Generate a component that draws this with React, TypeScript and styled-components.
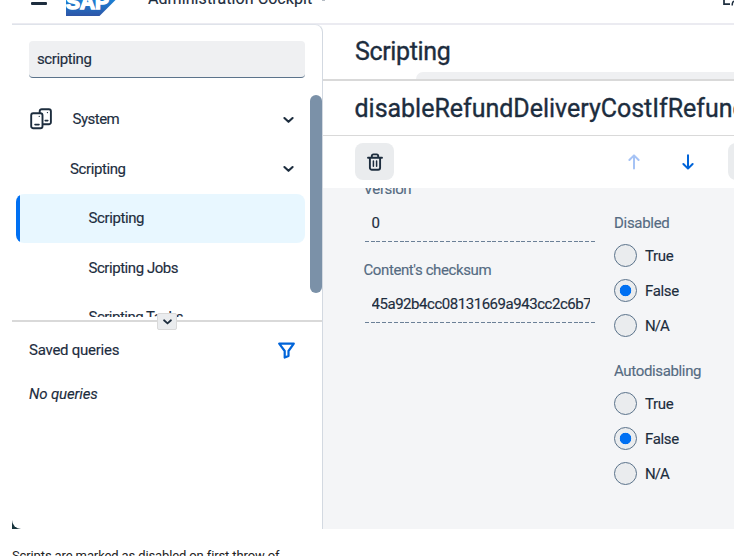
import React from 'react';
import styled, { createGlobalStyle } from 'styled-components';

const Global = createGlobalStyle`
  *, *::before { box-sizing: border-box; }
  html, body { margin: 0; padding: 0; background: #fff; overflow: hidden; }
  body { font-family: Roboto, "Liberation Sans", sans-serif; color: #1d2d3e; }
  svg { display: block; flex: none; }
`;

const Page = styled.div`
  width: 754px;
  height: 556px;
  padding: 0 20px 0 12px;
  overflow: hidden;
  display: flex;
  flex-direction: column;
`;

const Frame = styled.div`
  height: 529px;
  flex: none;
  display: flex;
  flex-direction: column;
  overflow: hidden;
  background: linear-gradient(#fff 480px, #17343d 480px);
`;

const Text = styled.span<{ $size?: number; $track?: number; $italic?: boolean; $muted?: boolean }>`
  font-size: ${p => p.$size ?? 15}px;
  line-height: 20px;
  letter-spacing: ${p => p.$track ?? 0}px;
  font-style: ${p => (p.$italic ? 'italic' : 'normal')};
  color: ${p => (p.$muted ? '#556b82' : '#1d2d3e')};
  white-space: nowrap;
  -webkit-text-stroke: ${p => ((p.$size ?? 15) > 20 ? 0.35 : 0.15)}px currentColor;
`;

const Header = styled.header`
  height: 25px;
  flex: none;
  display: flex;
  align-items: flex-start;
  background: #fff;
  border-bottom: 2px solid #ebebf1;
  padding-left: 19px;
  ${Text} { margin: -11px 0 0 31px; }
`;

const MenuBar = styled.span`
  width: 16px;
  height: 2.5px;
  margin: 2px 19px 0 0;
  border-radius: 1px;
  background: #1d2d3e;
`;

const HeaderArrow = styled.span`
  width: 3px;
  height: 1px;
  margin-left: 10px;
  background: #b5bcc4;
`;

const HeaderEnd = styled.div`
  margin-left: auto;
`;

const Body = styled.div`
  flex: 1;
  min-height: 0;
  display: flex;
`;

const Sidebar = styled.nav`
  width: 311px;
  flex: none;
  display: flex;
  flex-direction: column;
  margin-top: -1px;
  border-right: 1px solid #d3d9e1;
  border-top: 1px solid #dfe3ea;
  border-top-right-radius: 8px;
  border-bottom-left-radius: 9px;
  background: #fff;
`;

const Search = styled.div`
  margin: 16px 17px;
  width: 276px;
  height: 37px;
  flex: none;
  display: flex;
  align-items: center;
  padding-left: 8px;
  border-radius: 4px;
  background: #eff0f2;
  border-bottom: 1px solid #5b738b;
`;

const TreeArea = styled.div`
  height: 223px;
  flex: none;
  display: flex;
  overflow: hidden;
  padding-left: 4px;
`;

const Tree = styled.div`
  width: 289px;
  padding-top: 0.5px;
  display: flex;
  flex-direction: column;
`;

const TreeRow = styled.div<{ $indent: number; $selected?: boolean }>`
  height: 49.5px;
  flex: none;
  display: flex;
  align-items: center;
  padding: 0 10px 0 ${p => p.$indent}px;
  border-radius: 8px;
  background: ${p => (p.$selected ? 'linear-gradient(90deg, #0070f2 4.5px, #e8f7ff 4.5px)' : 'transparent')};
  > svg { margin-left: auto; }
`;

const IconSlot = styled.span`
  width: 42.5px;
  flex: none;
`;

const ScrollThumb = styled.div`
  width: 12.5px;
  height: 198px;
  margin: 1px 0 0 4.5px;
  border-radius: 7px;
  background: #7b91a8;
`;

const Splitter = styled.div`
  height: 2px;
  flex: none;
  margin-top: 3px;
  background: #d9d9d9;
  display: flex;
  align-items: center;
  justify-content: center;
`;

const SplitterButton = styled.span`
  width: 20px;
  height: 17px;
  flex: none;
  position: relative;
  display: flex;
  align-items: center;
  justify-content: center;
  background: #eaecee;
  border: 1px solid #d9d9d9;
  border-radius: 2px;
`;

const Queries = styled.div`
  display: flex;
  flex-direction: column;
  gap: 24px;
  padding: 18px 27px 0 17px;
`;

const QueriesHead = styled.div`
  display: flex;
  justify-content: space-between;
  align-items: center;
`;

const Main = styled.main`
  flex: 1;
  min-width: 0;
  display: flex;
  flex-direction: column;
  background: #fff;
  overflow: hidden;
`;

const TitleBar = styled.div`
  height: 56px;
  flex: none;
  display: flex;
  flex-direction: column;
  justify-content: space-between;
  padding: 17px 0 0 32px;
  border-bottom: 2px solid #d9d9d9;
`;

const FilterStrip = styled.div`
  height: 7px;
  margin-left: 61px;
  border-top-left-radius: 8px;
  background: #eff0f2;
`;

const RecordTitle = styled.div`
  height: 55px;
  flex: none;
  padding: 17.5px 0 0 31.5px;
  border-bottom: 1px solid #d9d9d9;
  overflow: hidden;
  display: flex;
`;

const Toolbar = styled.div`
  height: 52px;
  flex: none;
  display: flex;
  align-items: center;
  padding: 0 0 1px 32px;
  overflow: hidden;
`;

const ToolButton = styled.span`
  width: 39px;
  height: 37px;
  flex: none;
  display: flex;
  align-items: center;
  justify-content: center;
  border-radius: 8px;
  background: #eaecee;
`;

const ArrowGroup = styled.div`
  display: flex;
  gap: 38px;
  margin: 0 31.5px 0 232px;
`;

const Content = styled.div`
  flex: 1;
  min-height: 0;
  display: flex;
  overflow: hidden;
  background: #f4f5f7;
`;

const FieldColumn = styled.div`
  width: 232px;
  margin: -9px 0 0 40.5px;
  display: flex;
  flex-direction: column;
  gap: 18px;
`;

const Field = styled.div`
  display: flex;
  flex-direction: column;
  gap: 5px;
`;

const Value = styled.div`
  height: 38px;
  margin-left: 1.5px;
  padding: 0 5px 0 6.5px;
  display: flex;
  align-items: center;
  background: repeating-linear-gradient(90deg, #6b8097 0 4px, #f4f5f7 4px 5.8px) bottom / 100% 1.3px no-repeat;
`;

const Clip = styled.span`
  overflow: hidden;
  width: 218.5px;
  display: flex;
`;

const RadioColumn = styled.div`
  margin: 24.5px 0 0 18.5px;
  display: flex;
  flex-direction: column;
  gap: 23.5px;
`;

const RadioGroup = styled.div`
  display: flex;
  flex-direction: column;
`;

const RadioList = styled.div`
  display: flex;
  flex-direction: column;
  gap: 12px;
  margin-top: 11.5px;
`;

const RadioRow = styled.label`
  display: flex;
  align-items: center;
  gap: 8px;
  height: 23px;
`;

const Circle = styled.span<{ $on: boolean }>`
  width: 23px;
  height: 23px;
  border: 1px solid #5b738b;
  border-radius: 50%;
  background: ${p => (p.$on ? 'radial-gradient(circle, #0070f2 5.4px, #eaecee 6.1px)' : '#eaecee')};
`;

const Caption = styled.div`
  padding-top: 19px;
  line-height: 16px;
  font-size: 13px;
  letter-spacing: -0.12px;
  color: #222;
  white-space: nowrap;
`;

const Chevron = ({ size = 13 }: { size?: number }) => (
  <svg width={size} height={size} viewBox="0 0 13 13" fill="none" stroke="#1d2d3e" strokeWidth="2.1" strokeLinecap="round" strokeLinejoin="round">
    <path d="M2.4 5 6.5 8.8 10.6 5" />
  </svg>
);

const Logo = () => (
  <svg width="51" height="17" viewBox="0 0 51 17">
    <defs>
      <linearGradient id="sap" x1="0" y1="0" x2="0" y2="1">
        <stop offset="0" stopColor="#1b80d4" />
        <stop offset="1" stopColor="#2e55a7" />
      </linearGradient>
    </defs>
    <path d="M0 0H49.5L33.5 16H0Z" fill="url(#sap)" />
    <text x="0" y="9.2" fontFamily="Liberation Sans, sans-serif" fontWeight="700" fontSize="21" textLength="43" lengthAdjust="spacingAndGlyphs" fill="#fff" stroke="#fff" strokeWidth="1.5">SAP</text>
  </svg>
);

const SystemIcon = () => (
  <svg width="22" height="22" viewBox="0 0 22 22" fill="none" stroke="#1d2d3e" strokeWidth="1.9" strokeLinecap="round" strokeLinejoin="round">
    <rect x="1.2" y="5.2" width="11.3" height="15" rx="2" />
    <path d="M9.7 4.6V3.2a2 2 0 0 1 2-2h7.2a2 2 0 0 1 2 2v11a2 2 0 0 1-2 2h-5.6" />
    <path d="M5 16.6h4M15.2 12.6h2.6" strokeWidth="1.6" />
    <path d="M9.2 8.3h.1M17.4 4.6h.1" strokeWidth="1.3" />
  </svg>
);

const FilterIcon = () => (
  <svg width="17" height="17" viewBox="0 0 17 17" fill="none" stroke="#0064d9" strokeWidth="2.2" strokeLinejoin="round">
    <path d="M1.2 1.6H15.8L10.5 9V14L6.7 15.6V9Z" />
  </svg>
);

const TrashIcon = () => (
  <svg width="16" height="18" viewBox="0 0 16 18" fill="none" stroke="#1d2d3e" strokeWidth="1.9" strokeLinecap="round" strokeLinejoin="round">
    <path d="M1 4.8H15M4.8 4.4V3a1.6 1.6 0 0 1 1.6-1.6h3.2A1.6 1.6 0 0 1 11.2 3v1.4M2.9 5v9.7a2 2 0 0 0 2 2h6.2a2 2 0 0 0 2-2V5" />
    <path d="M6.4 8v5.2M9.6 8v5.2" strokeWidth="1.5" />
  </svg>
);

const Arrow = ({ up, color }: { up?: boolean; color: string }) => (
  <svg width="16" height="16" viewBox="0 0 16 16" fill="none" stroke={color} strokeWidth="2" strokeLinecap="round" strokeLinejoin="round">
    <path d={up ? 'M8 14.6V1.6M3.4 6 8 1.4 12.6 6' : 'M8 1.2V14.4M3.4 10 8 14.6 12.6 10'} />
  </svg>
);

const UserIcon = () => (
  <svg width="12" height="6" viewBox="0 0 12 6" fill="none" stroke="#1d2d3e" strokeWidth="1.7">
    <path d="M2 0V4.1H8" />
    <path d="M12 1.2C10.6 1.4 10.2 2.2 10.2 5.4" strokeWidth="1.5" />
  </svg>
);

const Radios = ({ title, track }: { title: string; track: number }) => (
  <RadioGroup>
    <Text $muted $track={track}>{title}</Text>
    <RadioList>
      {['True', 'False', 'N/A'].map(label => (
        <RadioRow key={label}>
          <Circle $on={label === 'False'} />
          <Text $track={label === 'N/A' ? -0.9 : -0.35}>{label}</Text>
        </RadioRow>
      ))}
    </RadioList>
  </RadioGroup>
);

export default function App() {
  return (
    <Page>
      <Global />
      <Frame>
        <Header>
          <MenuBar />
          <Logo />
          <Text $size={16} $track={0.08}>Administration Cockpit</Text>
          <HeaderArrow />
          <HeaderEnd><UserIcon /></HeaderEnd>
        </Header>
        <Body>
          <Sidebar>
            <Search><Text $track={-0.4}>scripting</Text></Search>
            <TreeArea>
              <Tree>
                <TreeRow $indent={14}>
                  <IconSlot><SystemIcon /></IconSlot>
                  <Text $track={-0.5}>System</Text>
                  <Chevron />
                </TreeRow>
                <TreeRow $indent={54}><Text $track={-0.4}>Scripting</Text><Chevron /></TreeRow>
                <TreeRow $indent={72.5} $selected><Text $track={-0.4}>Scripting</Text></TreeRow>
                <TreeRow $indent={72.5}><Text $track={-0.45}>Scripting Jobs</Text></TreeRow>
                <TreeRow $indent={72.5}><Text $track={-0.5}>Scripting Tasks</Text></TreeRow>
              </Tree>
              <ScrollThumb />
            </TreeArea>
            <Splitter><SplitterButton><Chevron size={11} /></SplitterButton></Splitter>
            <Queries>
              <QueriesHead><Text $track={-0.25}>Saved queries</Text><FilterIcon /></QueriesHead>
              <Text $italic $track={-0.15}>No queries</Text>
            </Queries>
          </Sidebar>
          <Main>
            <TitleBar>
              <Text $size={25} $track={-0.35}>Scripting</Text>
              <FilterStrip />
            </TitleBar>
            <RecordTitle><Text $size={25} $track={-0.02}>disableRefundDeliveryCostIfRefundDelivery</Text></RecordTitle>
            <Toolbar>
              <ToolButton><TrashIcon /></ToolButton>
              <ArrowGroup><Arrow up color="#a6c3f5" /><Arrow color="#0064d9" /></ArrowGroup>
              <ToolButton />
            </Toolbar>
            <Content>
              <FieldColumn>
                <Field>
                  <Text $muted $track={-0.4}>Version</Text>
                  <Value><Text>0</Text></Value>
                </Field>
                <Field>
                  <Text $muted $track={-0.4}>Content's checksum</Text>
                  <Value><Clip><Text $track={-0.46}>45a92b4cc08131669a943cc2c6b7</Text></Clip></Value>
                </Field>
              </FieldColumn>
              <RadioColumn>
                <Radios title="Disabled" track={-0.3} />
                <Radios title="Autodisabling" track={-0.35} />
              </RadioColumn>
            </Content>
          </Main>
        </Body>
      </Frame>
      <Caption>Scripts are marked as disabled on first throw of</Caption>
    </Page>
  );
}
